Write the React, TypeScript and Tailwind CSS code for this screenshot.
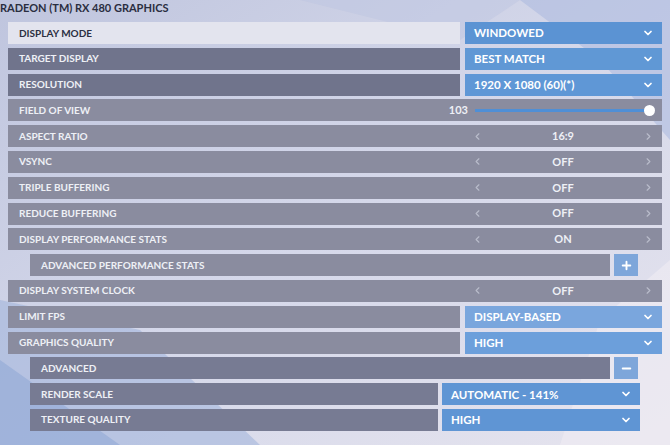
import React from 'react';
import { ChevronDown, ChevronLeft, ChevronRight, Plus, Minus } from 'lucide-react';

type RowProps = { label: string; indent?: boolean; tone?: 'light' | 'dark' | 'mid' | 'normal' };

const labelTone: Record<string, string> = {
  light: 'bg-[#e3e4ee] text-[#2b2f42]',
  dark: 'bg-[#70748c] text-[#eef0f6]',
  mid: 'bg-[#777b93] text-[#eef0f6]',
  normal: 'bg-[#8a8c9f] text-[#eef0f6]',
};

function Label({ label, tone = 'normal', className = '' }: RowProps & { className?: string }) {
  return (
    <div className={`flex items-center h-full pl-[11px] text-[10px] ${labelTone[tone]} ${className}`}>
      <span>{label}</span>
    </div>
  );
}

function Dropdown({ value, color = 'bg-[#5b93d3]', className = 'w-[197px]' }: { value: string; color?: string; className?: string }) {
  return (
    <div className={`flex items-center justify-between h-full pl-[9px] pr-[8px] text-white text-[11.5px] ${color} ${className}`}>
      <span>{value}</span>
      <ChevronDown size={12} strokeWidth={3.5} />
    </div>
  );
}

function SelectRow({ label, value, tone, color }: { label: string; value: string; tone?: RowProps['tone']; color?: string }) {
  return (
    <div className="flex h-[22px] gap-[5px]">
      <Label label={label} tone={tone} className="flex-1" />
      <Dropdown value={value} color={color} />
    </div>
  );
}

function ToggleRow({ label, value }: { label: string; value: string }) {
  return (
    <div className="flex h-[22px] bg-[#8a8c9f] text-[#eef0f6]">
      <div className="flex items-center flex-1 pl-[11px] text-[10px]">{label}</div>
      <div className="flex items-center justify-between w-[196px] pl-[6px] pr-[8px]">
        <ChevronLeft size={11} strokeWidth={2.5} className="text-[#b9bccb]" />
        <span>{value}</span>
        <ChevronRight size={11} strokeWidth={2.5} className="text-[#b9bccb]" />
      </div>
    </div>
  );
}

function SubRow({ label, icon }: { label: string; icon: 'plus' | 'minus' }) {
  return (
    <div className="flex h-[22px] gap-[4px] ml-[22px] mr-[24px]">
      <Label label={label} tone={icon === 'minus' ? 'mid' : 'normal'} className="flex-1" />
      <div className="flex items-center justify-center w-[24px] h-full bg-[#7ea6da] text-white">
        {icon === 'plus' ? <Plus size={13} strokeWidth={3.5} /> : <Minus size={13} strokeWidth={3.5} />}
      </div>
    </div>
  );
}

function SubSelect({ label, value }: { label: string; value: string }) {
  return (
    <div className="flex h-[22px] gap-[4px] ml-[22px] mr-[22px]">
      <Label label={label} tone="mid" className="flex-1" />
      <Dropdown value={value} color="bg-[#5f95d4]" className="w-[198px]" />
    </div>
  );
}

export default function App() {
  return (
    <div
      className="relative w-[670px] h-[445px] overflow-hidden bg-gradient-to-br from-[#bfc5de] via-[#d5d8ea] to-[#e6e4ee] text-[11px] font-bold uppercase"
      style={{ fontFamily: 'Lato, "Open Sans", sans-serif' }}
    >
      {/* background shards */}
      <svg className="absolute inset-0" width="670" height="445" viewBox="0 0 670 445">
        <polygon points="0,300 0,445 260,445 140,330" fill="#9fb2da" opacity="0.55" />
        <polygon points="0,360 0,445 120,445" fill="#8aa3d4" opacity="0.5" />
        <polygon points="520,0 670,0 670,140 600,60" fill="#aebbe0" opacity="0.6" />
        <polygon points="600,320 670,260 670,445 560,445" fill="#f0ecf3" opacity="0.6" />
        <polygon points="300,0 520,0 460,40" fill="#bec5e2" opacity="0.5" />
      </svg>

      <div className="relative flex flex-col">
        <div className="h-[18px] pt-[1px] text-[11px] leading-[14px] text-[#2a2e40]">RADEON (TM) RX 480 GRAPHICS</div>

        <div className="flex flex-col gap-[3.8px] px-[8px] pt-[4px]">
          <SelectRow label="DISPLAY MODE" value="WINDOWED" tone="light" color="bg-[#5b93d3]" />
          <SelectRow label="TARGET DISPLAY" value="BEST MATCH" tone="dark" color="bg-[#6098d5]" />
          <SelectRow label="RESOLUTION" value="1920 X 1080 (60)(*)" tone="dark" color="bg-[#5f97d6]" />

          <div className="flex h-[22px] items-center bg-[#8a8c9f] text-[#eef0f6]">
            <div className="flex-1 pl-[11px] text-[10px]">FIELD OF VIEW</div>
            <span className="font-bold">103</span>
            <div className="relative ml-[7px] mr-[12px] w-[175px] h-[3px] bg-[#4f8fd6]">
              <div className="absolute -right-[5px] -top-[4px] w-[11px] h-[11px] rounded-full bg-white" />
            </div>
          </div>

          <ToggleRow label="ASPECT RATIO" value="16:9" />
          <ToggleRow label="VSYNC" value="OFF" />
          <ToggleRow label="TRIPLE BUFFERING" value="OFF" />
          <ToggleRow label="REDUCE BUFFERING" value="OFF" />
          <ToggleRow label="DISPLAY PERFORMANCE STATS" value="ON" />
          <SubRow label="ADVANCED PERFORMANCE STATS" icon="plus" />
          <ToggleRow label="DISPLAY SYSTEM CLOCK" value="OFF" />
          <SelectRow label="LIMIT FPS" value="DISPLAY-BASED" color="bg-[#7aa6dd]" />
          <SelectRow label="GRAPHICS QUALITY" value="HIGH" color="bg-[#6c9fdb]" />
          <SubRow label="ADVANCED" icon="minus" />
          <SubSelect label="RENDER SCALE" value="AUTOMATIC - 141%" />
          <SubSelect label="TEXTURE QUALITY" value="HIGH" />
        </div>
      </div>
    </div>
  );
}
